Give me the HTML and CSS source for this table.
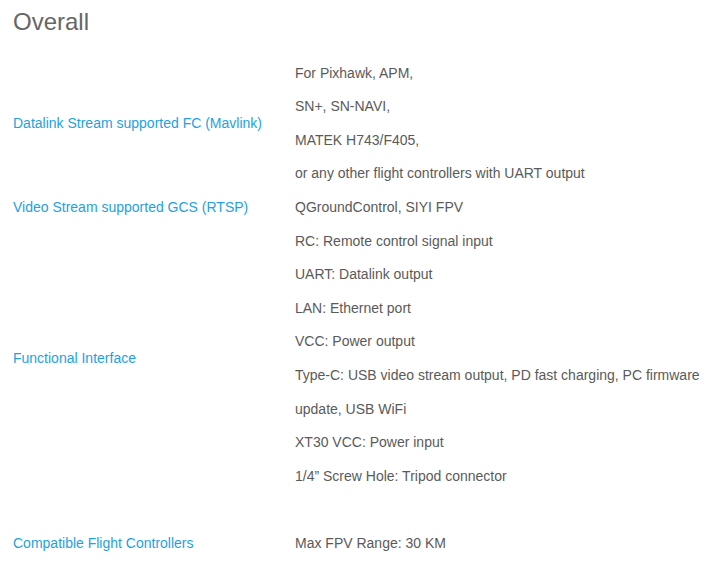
FILE: index.html
```html
<!DOCTYPE html>
<html>
<head>
<meta charset="utf-8">
<link rel="stylesheet" href="styles.css">
</head>
<body>
<div class="page">
  <h2 class="title">Overall</h2>
  <table class="spec">
    <tr>
      <td class="label">Datalink Stream supported FC (Mavlink)</td>
      <td class="value">For Pixhawk, APM,<br>SN+, SN-NAVI,<br>MATEK H743/F405,<br>or any other flight controllers with UART output</td>
    </tr>
    <tr>
      <td class="label">Video Stream supported GCS (RTSP)</td>
      <td class="value">QGroundControl, SIYI FPV</td>
    </tr>
    <tr>
      <td class="label">Functional Interface</td>
      <td class="value">RC: Remote control signal input<br>UART: Datalink output<br>LAN: Ethernet port<br>VCC: Power output<br>Type-C: USB video stream output, PD fast charging, PC firmware update, USB WiFi<br>XT30 VCC: Power input<br>1/4” Screw Hole: Tripod connector</td>
    </tr>
    <tr class="spaced">
      <td class="label">Compatible Flight Controllers</td>
      <td class="value">Max FPV Range: 30 KM</td>
    </tr>
  </table>
</div>
</body>
</html>
```
FILE: styles.css
```css
html, body {
  margin: 0;
  padding: 0;
  background: #ffffff;
}
.page {
  padding: 8px 0 0 13px;
  font-family: "Liberation Sans", Arial, sans-serif;
}
.title {
  margin: 0;
  font-size: 24px;
  font-weight: normal;
  line-height: 27.6px;
  color: #666666;
}
.spec {
  border-collapse: collapse;
  margin-top: 21px;
  font-size: 14px;
  line-height: 33.6px;
}
.spec td {
  padding: 0;
  vertical-align: middle;
}
.label {
  width: 282px;
  color: #1ea1e3;
}
.value {
  width: 414px;
  color: #5a5a5a;
}
.spaced td {
  padding-top: 33.6px;
}
```
